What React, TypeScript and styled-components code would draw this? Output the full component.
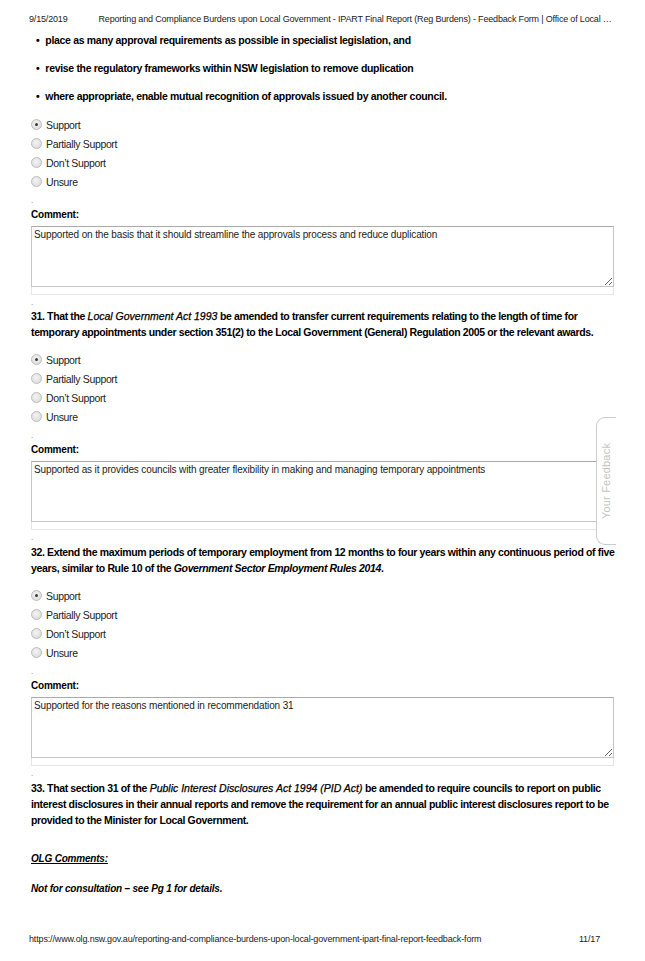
import styled, { createGlobalStyle } from "styled-components";

const GlobalStyle = createGlobalStyle`
  html, body {
    margin: 0;
    padding: 0;
    background: #ffffff;
  }
  body {
    font-family: "Liberation Sans", Arial, sans-serif;
    color: #000000;
  }
`;

const Page = styled.div`
  position: relative;
  width: 645px;
  height: 961px;
  overflow: hidden;
  background: #ffffff;
`;

const PrintHeader = styled.header`
  display: flex;
  gap: 31px;
  padding: 14px 0 0 29px;
  font-size: 9px;
  line-height: 11px;
  letter-spacing: -0.17px;
  color: #222;
  white-space: nowrap;
`;

const Content = styled.main`
  width: 583px;
  padding-left: 31px;
`;

const BulletList = styled.ul`
  list-style: none;
  margin: 8px 0 0 0;
  padding: 0;
  display: flex;
  flex-direction: column;
  gap: 14px;
`;

const BulletItem = styled.li`
  display: flex;
  gap: 6px;
  font-size: 10.5px;
  line-height: 14px;
  font-weight: 700;
  letter-spacing: -0.32px;
  &::before {
    content: "•";
    padding-left: 5px;
  }
`;

const RadioGroup = styled.div<{ $top: number }>`
  display: flex;
  flex-direction: column;
  margin-top: ${(p) => p.$top}px;
`;

const RadioRow = styled.label`
  display: flex;
  align-items: center;
  gap: 4px;
  height: 19px;
  font-size: 10.5px;
  letter-spacing: -0.35px;
  color: #222;
`;

const RadioCircle = styled.span<{ $checked?: boolean }>`
  position: relative;
  width: 9px;
  height: 9px;
  border-radius: 50%;
  border: 1px solid #bdbdbd;
  background: radial-gradient(circle at 45% 40%, #f4f4f4 0%, #d6d6d6 100%);
  &::after {
    content: "";
    display: ${(p) => (p.$checked ? "block" : "none")};
    position: absolute;
    left: 3px;
    top: 3px;
    width: 3px;
    height: 3px;
    border-radius: 50%;
    background: #3a3a3a;
  }
`;

const Dot = styled.div<{ $top: number }>`
  margin-top: ${(p) => p.$top}px;
  height: 10px;
  font-size: 8px;
  line-height: 10px;
  color: #777;
`;

const CommentLabel = styled.div`
  margin-top: 3px;
  font-size: 10px;
  line-height: 12px;
  font-weight: 700;
  letter-spacing: -0.2px;
`;

const CommentBox = styled.textarea`
  display: block;
  box-sizing: border-box;
  margin-top: 5px;
  width: 583px;
  height: 61px;
  padding: 2px 2px;
  border: 1px solid #c6c6c6;
  border-top-color: #aaaaaa;
  font-family: "Liberation Sans", Arial, sans-serif;
  font-size: 10px;
  line-height: 12px;
  letter-spacing: -0.13px;
  color: #222;
  resize: vertical;
  outline: none;
`;

const CounterStrip = styled.div`
  box-sizing: border-box;
  width: 583px;
  height: 8px;
  border: 1px solid #e6e6e6;
  border-top: none;
`;

const Question = styled.p<{ $top?: number }>`
  margin: ${(p) => p.$top ?? 0}px 0 0 0;
  font-size: 10.5px;
  line-height: 16px;
  font-weight: 700;
  letter-spacing: -0.36px;
  white-space: nowrap;
`;

const Title = styled.em<{ $bold?: boolean }>`
  font-style: italic;
  font-weight: ${(p) => (p.$bold ? 700 : 400)};
  letter-spacing: ${(p) => (p.$bold ? "-0.36px" : "0")};
  -webkit-text-stroke: ${(p) => (p.$bold ? "0" : "0.25px #000")};
`;

const OlgHeading = styled.p`
  margin: 24px 0 0 0;
  font-size: 10px;
  line-height: 14px;
  font-weight: 700;
  font-style: italic;
  letter-spacing: -0.2px;
  text-decoration: underline;
`;

const OlgNote = styled.p`
  margin: 16px 0 0 0;
  font-size: 10px;
  line-height: 14px;
  font-weight: 700;
  font-style: italic;
  letter-spacing: -0.2px;
`;

const PrintFooter = styled.footer`
  position: absolute;
  left: 29px;
  right: 45px;
  top: 934px;
  display: flex;
  justify-content: space-between;
  font-size: 9px;
  line-height: 11px;
  letter-spacing: -0.15px;
  color: #222;
`;

const FeedbackTab = styled.div`
  position: absolute;
  left: 596px;
  top: 417px;
  width: 20px;
  height: 128px;
  box-sizing: border-box;
  border: 1px solid #cccccc;
  border-right: none;
  border-radius: 9px 0 0 9px;
  background: #ffffff;
  display: flex;
  align-items: center;
  justify-content: center;
`;

const FeedbackText = styled.span`
  transform: rotate(-90deg);
  white-space: nowrap;
  font-size: 11px;
  color: #c4c4c4;
  letter-spacing: 0.2px;
`;

const options = ["Support", "Partially Support", "Don’t Support", "Unsure"];

const Radios = ({ top }: { top: number }) => (
  <RadioGroup $top={top}>
    {options.map((o, i) => (
      <RadioRow key={o}>
        <RadioCircle $checked={i === 0} />
        {o}
      </RadioRow>
    ))}
  </RadioGroup>
);

const CommentBlock = ({ text }: { text: string }) => (
  <>
    <Dot $top={5}>.</Dot>
    <CommentLabel>Comment:</CommentLabel>
    <CommentBox readOnly value={text} />
    <CounterStrip />
    <Dot $top={3}>.</Dot>
  </>
);

export default function App() {
  return (
    <Page>
      <GlobalStyle />
      <PrintHeader>
        <span>9/15/2019</span>
        <span>
          Reporting and Compliance Burdens upon Local Government - IPART Final Report (Reg Burdens) - Feedback Form |
          Office of Local …
        </span>
      </PrintHeader>
      <Content>
        <BulletList>
          <BulletItem>place as many approval requirements as possible in specialist legislation, and</BulletItem>
          <BulletItem>revise the regulatory frameworks within NSW legislation to remove duplication</BulletItem>
          <BulletItem>where appropriate, enable mutual recognition of approvals issued by another council.</BulletItem>
        </BulletList>
        <Radios top={12} />
        <CommentBlock text="Supported on the basis that it should streamline the approvals process and reduce duplication" />
        <Question>
          31. That the <Title>Local Government Act 1993</Title> be amended to transfer current requirements relating to
          the length of time for
          <br />
          temporary appointments under section 351(2) to the Local Government (General) Regulation 2005 or the relevant
          awards.
        </Question>
        <Radios top={10} />
        <CommentBlock text="Supported as it provides councils with greater flexibility in making and managing temporary appointments" />
        <Question $top={1}>
          32. Extend the maximum periods of temporary employment from 12 months to four years within any continuous
          period of five
          <br />
          years, similar to Rule 10 of the <Title $bold>Government Sector Employment Rules 2014</Title>.
        </Question>
        <Radios top={10} />
        <CommentBlock text="Supported for the reasons mentioned in recommendation 31" />
        <Question $top={1}>
          33. That section 31 of the <Title>Public Interest Disclosures Act 1994 (PID Act)</Title> be amended to require
          councils to report on public
          <br />
          interest disclosures in their annual reports and remove the requirement for an annual public interest
          disclosures report to be
          <br />
          provided to the Minister for Local Government.
        </Question>
        <OlgHeading>OLG Comments:</OlgHeading>
        <OlgNote>Not for consultation – see Pg 1 for details.</OlgNote>
      </Content>
      <FeedbackTab>
        <FeedbackText>Your Feedback</FeedbackText>
      </FeedbackTab>
      <PrintFooter>
        <span>https://www.olg.nsw.gov.au/reporting-and-compliance-burdens-upon-local-government-ipart-final-report-feedback-form</span>
        <span>11/17</span>
      </PrintFooter>
    </Page>
  );
}
